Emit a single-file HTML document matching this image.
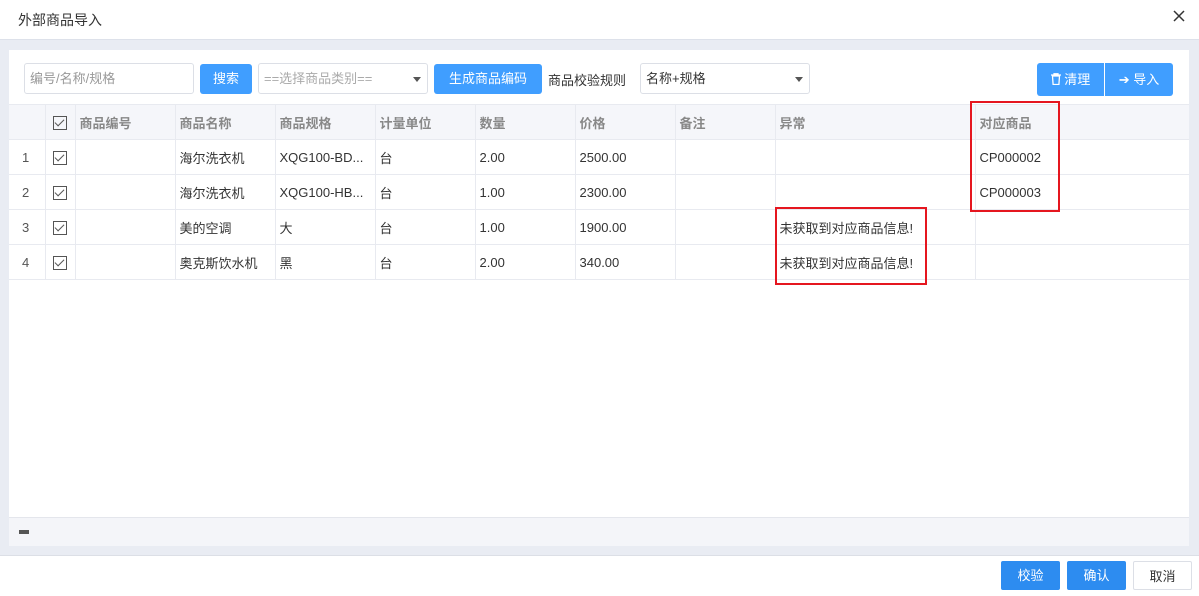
<!DOCTYPE html>
<html><head><meta charset="utf-8"><style>
*{box-sizing:border-box;margin:0;padding:0}
body{width:1199px;height:596px;overflow:hidden;background:#fff;font-family:"Liberation Sans","Noto Sans CJK SC",sans-serif;font-size:13px;color:#333;position:relative}
.abs{position:absolute}
.title{left:18px;top:10px;font-size:14px;color:#333}
.bg{left:0;top:39px;width:1199px;height:517px;background:#e9ecf3;border-top:1px solid #dde1ea;border-bottom:1px solid #dcdfe6}
.panel{left:9px;top:50px;width:1180px;height:496px;background:#fff}
.inp{border:1px solid #dcdfe6;border-radius:3px;height:31px;line-height:29px;padding-left:5px;color:#999;background:#fff}
.btn{background:#409eff;color:#fff;height:30px;line-height:30px;text-align:center;border-radius:3px}
.caret{position:absolute;right:6px;top:13px;border-left:4px solid transparent;border-right:4px solid transparent;border-top:5px solid #555}
table{position:absolute;left:9px;top:104px;border-collapse:collapse;table-layout:fixed;width:1180px}
td{height:35px;border:1px solid #e8eaf0;padding-left:4px;white-space:nowrap;overflow:hidden;color:#333}
tr.h td{background:#f5f6fa;color:#888;font-weight:bold}
tr td:first-child{border-left:none;padding-left:13px;color:#555}
tr td:last-child{border-right:none}
.cb{display:inline-block;width:14px;height:14px;border:1px solid #555;position:relative;vertical-align:middle;margin-left:3px}
.cb:after{content:"";position:absolute;left:3px;top:0px;width:4px;height:8px;border-right:1.5px solid #555;border-bottom:1.5px solid #555;transform:rotate(45deg)}
.red{border:2px solid #e5161f}
.fb{left:9px;top:517px;width:1180px;height:29px;background:#f4f5f9;border-top:1px solid #e4e6ec}
.b2{height:29px;line-height:29px;text-align:center;width:59px;top:561px;border-radius:2px}
</style></head><body>
<div class="abs title">外部商品导入</div>
<svg class="abs" style="left:1173px;top:10px" width="12" height="12" viewBox="0 0 12 12"><path d="M1 1L11 11M11 1L1 11" stroke="#333" stroke-width="1.5"/></svg>
<div class="abs bg"></div>
<div class="abs panel"></div>
<div class="abs inp" style="left:24px;top:63px;width:170px">编号/名称/规格</div>
<div class="abs btn" style="left:200px;top:64px;width:52px">搜索</div>
<div class="abs inp" style="left:258px;top:63px;width:170px;color:#aaa">==选择商品类别==<span class="caret"></span></div>
<div class="abs btn" style="left:434px;top:64px;width:108px">生成商品编码</div>
<div class="abs" style="left:548px;top:70px;color:#333">商品校验规则</div>
<div class="abs inp" style="left:640px;top:63px;width:170px;color:#333">名称+规格<span class="caret"></span></div>
<div class="abs btn" style="left:1037px;top:63px;width:67px;border-radius:3px 0 0 3px;height:33px;line-height:33px"><svg width="10" height="12" viewBox="0 0 10 12" style="vertical-align:-1px"><path d="M0 2h10M3 2V0.8h4V2M1.5 3h7l-0.6 8.5h-5.8z" stroke="#fff" stroke-width="1.3" fill="none"/></svg> 清理</div>
<div class="abs btn" style="left:1105px;top:63px;width:68px;border-radius:0 3px 3px 0;height:33px;line-height:33px">➔ 导入</div>
<table>
<colgroup><col style="width:36px"><col style="width:30px"><col style="width:100px"><col style="width:100px"><col style="width:100px"><col style="width:100px"><col style="width:100px"><col style="width:100px"><col style="width:100px"><col style="width:200px"><col></colgroup>
<tr class="h"><td></td><td><span class="cb"></span></td><td>商品编号</td><td>商品名称</td><td>商品规格</td><td>计量单位</td><td>数量</td><td>价格</td><td>备注</td><td>异常</td><td>对应商品</td></tr>
<tr><td>1</td><td><span class="cb"></span></td><td></td><td>海尔洗衣机</td><td>XQG100-BD...</td><td>台</td><td>2.00</td><td>2500.00</td><td></td><td></td><td>CP000002</td></tr>
<tr><td>2</td><td><span class="cb"></span></td><td></td><td>海尔洗衣机</td><td>XQG100-HB...</td><td>台</td><td>1.00</td><td>2300.00</td><td></td><td></td><td>CP000003</td></tr>
<tr><td>3</td><td><span class="cb"></span></td><td></td><td>美的空调</td><td>大</td><td>台</td><td>1.00</td><td>1900.00</td><td></td><td>未获取到对应商品信息!</td><td></td></tr>
<tr><td>4</td><td><span class="cb"></span></td><td></td><td>奥克斯饮水机</td><td>黑</td><td>台</td><td>2.00</td><td>340.00</td><td></td><td>未获取到对应商品信息!</td><td></td></tr>
</table>
<div class="abs red" style="left:970px;top:101px;width:90px;height:111px"></div>
<div class="abs red" style="left:775px;top:207px;width:152px;height:78px"></div>
<div class="abs fb"><div class="abs" style="left:10px;top:12px;width:10px;height:4px;background:#555"></div></div>
<div class="abs b2" style="left:1001px;background:#2d8cf0;color:#fff">校验</div>
<div class="abs b2" style="left:1067px;background:#2d8cf0;color:#fff">确认</div>
<div class="abs b2" style="left:1133px;border:1px solid #dcdfe6;color:#333">取消</div>
</body></html>
